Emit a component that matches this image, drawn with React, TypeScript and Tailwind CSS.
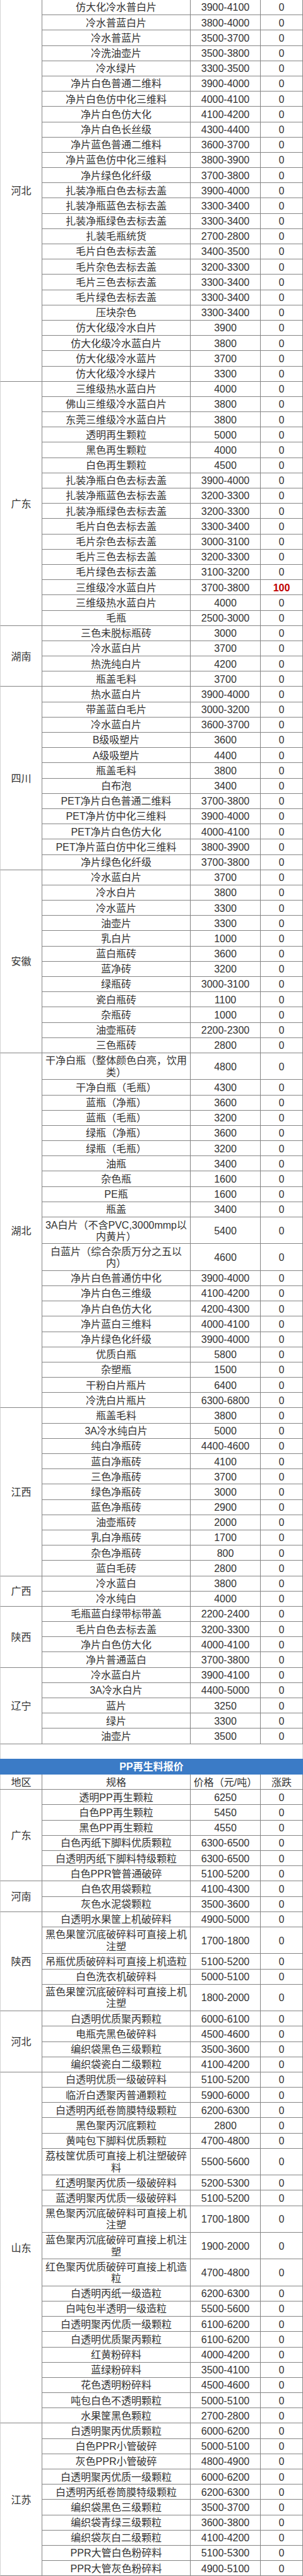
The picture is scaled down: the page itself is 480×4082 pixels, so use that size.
import React from 'react';

type Row = [string, string, string?];

interface Group {
  region: string;
  rows: Row[];
}

const petGroups: Group[] = [
  {
    region: '河北',
    rows: [
      ['仿大化冷水普白片', '3900-4100'],
      ['冷水普蓝白片', '3800-4000'],
      ['冷水普蓝片', '3500-3700'],
      ['冷洗油壶片', '3500-3800'],
      ['冷水绿片', '3300-3500'],
      ['净片白色普通二维料', '3900-4000'],
      ['净片白色仿中化三维料', '4000-4100'],
      ['净片白色仿大化', '4100-4200'],
      ['净片白色长丝级', '4300-4400'],
      ['净片蓝色普通二维料', '3600-3700'],
      ['净片蓝色仿中化三维料', '3800-3900'],
      ['净片绿色化纤级', '3700-3800'],
      ['扎装净瓶白色去标去盖', '3900-4000'],
      ['扎装净瓶蓝色去标去盖', '3300-3400'],
      ['扎装净瓶绿色去标去盖', '3300-3400'],
      ['扎装毛瓶统货', '2700-2800'],
      ['毛片白色去标去盖', '3400-3500'],
      ['毛片杂色去标去盖', '3200-3300'],
      ['毛片三色去标去盖', '3300-3400'],
      ['毛片绿色去标去盖', '3300-3400'],
      ['压块杂色', '3300-3400'],
      ['仿大化级冷水白片', '3900'],
      ['仿大化级冷水蓝白片', '3800'],
      ['仿大化级冷水蓝片', '3700'],
      ['仿大化级冷水绿片', '3300'],
    ],
  },
  {
    region: '广东',
    rows: [
      ['三维级热水蓝白片', '4000'],
      ['佛山三维级冷水蓝白片', '3800'],
      ['东莞三维级冷水蓝白片', '3800'],
      ['透明再生颗粒', '5000'],
      ['黑色再生颗粒', '4000'],
      ['白色再生颗粒', '4500'],
      ['扎装净瓶白色去标去盖', '3900-4000'],
      ['扎装净瓶蓝色去标去盖', '3200-3300'],
      ['扎装净瓶绿色去标去盖', '3200-3300'],
      ['毛片白色去标去盖', '3300-3400'],
      ['毛片杂色去标去盖', '3000-3100'],
      ['毛片三色去标去盖', '3200-3300'],
      ['毛片绿色去标去盖', '3100-3200'],
      ['三维级冷水蓝白片', '3700-3800', '100'],
      ['三维级热水蓝白片', '4000'],
      ['毛瓶', '2500-3000'],
    ],
  },
  {
    region: '湖南',
    rows: [
      ['三色未脱标瓶砖', '3000'],
      ['冷水蓝白片', '3700'],
      ['热洗纯白片', '4200'],
      ['瓶盖毛料', '3700'],
    ],
  },
  {
    region: '四川',
    rows: [
      ['热水蓝白片', '3900-4000'],
      ['带盖蓝白毛片', '3000-3200'],
      ['冷水蓝白片', '3600-3700'],
      ['B级吸塑片', '3600'],
      ['A级吸塑片', '4400'],
      ['瓶盖毛料', '3800'],
      ['白布泡', '3400'],
      ['PET净片白色普通二维料', '3700-3800'],
      ['PET净片仿中化三维料', '3900-4000'],
      ['PET净片白色仿大化', '4000-4100'],
      ['PET净片蓝白仿中化三维料', '3800-3900'],
      ['净片绿色化纤级', '3700-3800'],
    ],
  },
  {
    region: '安徽',
    rows: [
      ['冷水蓝白片', '3700'],
      ['冷水白片', '3800'],
      ['冷水蓝片', '3300'],
      ['油壶片', '3300'],
      ['乳白片', '1000'],
      ['蓝白瓶砖', '3600'],
      ['蓝净砖', '3200'],
      ['绿瓶砖', '3000-3100'],
      ['瓷白瓶砖', '1100'],
      ['杂瓶砖', '1000'],
      ['油壶瓶砖', '2200-2300'],
      ['三色瓶砖', '2800'],
    ],
  },
  {
    region: '湖北',
    rows: [
      ['干净白瓶（整体颜色白亮，饮用类）', '4800'],
      ['干净白瓶（毛瓶）', '4300'],
      ['蓝瓶（净瓶）', '3600'],
      ['蓝瓶（毛瓶）', '3200'],
      ['绿瓶（净瓶）', '3600'],
      ['绿瓶（毛瓶）', '3200'],
      ['油瓶', '3400'],
      ['杂色瓶', '1600'],
      ['PE瓶', '1600'],
      ['瓶盖', '3400'],
      ['3A白片（不含PVC,3000mmp以内黄片）', '5400'],
      ['白蓝片（综合杂质万分之五以内）', '4600'],
      ['净片白色普通仿中化', '3900-4000'],
      ['净片白色三维级', '4100-4200'],
      ['净片白色仿大化', '4200-4300'],
      ['净片蓝白三维料', '4000-4100'],
      ['净片绿色化纤级', '3900-4000'],
      ['优质白瓶', '5800'],
      ['杂塑瓶', '1500'],
      ['干粉白片瓶片', '6400'],
      ['冷洗白片瓶片', '6300-6800'],
    ],
  },
  {
    region: '江西',
    rows: [
      ['瓶盖毛料', '3800'],
      ['3A冷水纯白片', '5000'],
      ['纯白净瓶砖', '4400-4600'],
      ['蓝白净瓶砖', '4100'],
      ['三色净瓶砖', '3700'],
      ['绿色净瓶砖', '3000'],
      ['蓝色净瓶砖', '2900'],
      ['油壶瓶砖', '2000'],
      ['乳白净瓶砖', '1700'],
      ['杂色净瓶砖', '800'],
      ['蓝白毛砖', '2800'],
    ],
  },
  {
    region: '广西',
    rows: [
      ['冷水蓝白', '3800'],
      ['冷水纯白', '4000'],
    ],
  },
  {
    region: '陕西',
    rows: [
      ['毛瓶蓝白绿带标带盖', '2200-2400'],
      ['毛片白色去标去盖', '3200-3300'],
      ['净片白色仿大化', '4000-4100'],
      ['净片普通蓝白', '3700-3800'],
    ],
  },
  {
    region: '辽宁',
    rows: [
      ['冷水蓝白片', '3900-4100'],
      ['3A冷水白片', '4400-5000'],
      ['蓝片', '3250'],
      ['绿片', '3300'],
      ['油壶片', '3500'],
    ],
  },
];

const ppGroups: Group[] = [
  {
    region: '广东',
    rows: [
      ['透明PP再生颗粒', '6250'],
      ['白色PP再生颗粒', '5450'],
      ['黑色PP再生颗粒', '4550'],
      ['白色丙纸下脚料优质颗粒', '6300-6500'],
      ['白透明丙纸下脚料特级颗粒', '6300-6500'],
      ['白色PPR管普通破碎', '5100-5200'],
    ],
  },
  {
    region: '河南',
    rows: [
      ['白色农用袋颗粒', '4100-4300'],
      ['灰色水泥袋颗粒', '3500-3600'],
    ],
  },
  {
    region: '陕西',
    rows: [
      ['白透明水果筐上机破碎料', '4900-5000'],
      ['黑色果筐沉底破碎料可直接上机注塑', '1700-1800'],
      ['吊瓶优质破碎料可直接上机造粒', '5100-5200'],
      ['白色洗衣机破碎料', '5000-5100'],
      ['蓝色果筐沉底破碎料可直接上机注塑', '1800-2000'],
    ],
  },
  {
    region: '河北',
    rows: [
      ['白透明优质聚丙颗粒', '6000-6100'],
      ['电瓶壳黑色破碎料', '4500-4600'],
      ['编织袋黑色三级颗粒', '3500-3600'],
      ['编织袋瓷白二级颗粒', '4100-4200'],
    ],
  },
  {
    region: '山东',
    rows: [
      ['白透明优质一级破碎料', '5100-5200'],
      ['临沂白透聚丙普通颗粒', '5900-6000'],
      ['白透明丙纸卷筒膜特级颗粒', '6200-6300'],
      ['黑色聚丙沉底颗粒', '2800'],
      ['黄吨包下脚料优质颗粒', '4700-4800'],
      ['荔枝筐优质可直接上机注塑破碎料', '5500-5600'],
      ['红透明聚丙优质一级破碎料', '5200-5300'],
      ['蓝透明聚丙优质一级破碎料', '5100-5200'],
      ['黑色聚丙沉底破碎料可直接上机注塑', '1700-1800'],
      ['蓝色聚丙沉底破碎可直接上机注塑', '1900-2000'],
      ['红色聚丙优质破碎可直接上机造粒', '4700-4800'],
      ['白透明丙纸一级造粒', '6200-6300'],
      ['白吨包半透明一级造粒', '5500-5600'],
      ['白透明聚丙优质一级颗粒', '6100-6200'],
      ['白透明优质聚丙颗粒', '6100-6200'],
      ['红黄粉碎料', '4000-4200'],
      ['蓝绿粉碎料', '3500-4100'],
      ['花色透明粉碎料', '4500-4600'],
      ['吨包白色不透明颗粒', '5000-5100'],
      ['水果筐黑色颗粒', '2700-2800'],
    ],
  },
  {
    region: '江苏',
    rows: [
      ['白透明聚丙优质颗粒', '6000-6200'],
      ['白色PPR小管破碎', '5000-5100'],
      ['灰色PPR小管破碎', '4800-4900'],
      ['白透明聚丙优质一级颗粒', '6000-6200'],
      ['白透明丙纸卷筒膜特级颗粒', '6200-6300'],
      ['编织袋黑色三级颗粒', '3500-3700'],
      ['编织袋青绿三级颗粒', '3600-3800'],
      ['编织袋灰白二级颗粒', '4100-4200'],
      ['PPR大管白色粉碎料', '5100-5300'],
      ['PPR大管灰色粉碎料', '4900-5100'],
    ],
  },
];

const cell =
  'flex items-center justify-center text-center border-r border-[#858585] px-[4px] pt-[2px] leading-[18.2px]';

// long specs wrap onto two lines in the 235px column
const rowHeight = (spec: string) => (spec.length >= 15 ? 'h-[42.4px]' : 'h-[24.19px]');

const PriceGroup: React.FC<{ group: Group }> = ({ group }) => (
  <div className="flex">
    <div className="flex w-[67px] shrink-0 items-center justify-center border-r border-b border-l border-[#858585] border-l-[#d4d4d4] pt-[2px]">
      {group.region}
    </div>
    <div className="flex flex-1 flex-col">
      {group.rows.map(([spec, price, change = '0'], i) => (
        <div key={i} className={`flex border-b border-[#858585] ${rowHeight(spec)}`}>
          <div className={`${cell} w-[235px]`}>{spec}</div>
          <div className={`${cell} w-[111px]`}>{price}</div>
          <div className={`${cell} w-[67px]`}>
            {change === '0' ? change : <span className="font-bold text-[#c00000]">{change}</span>}
          </div>
        </div>
      ))}
    </div>
  </div>
);

export default function App() {
  return (
    <div className="w-[480px] bg-white text-[16px] text-[#333] font-['Liberation_Sans','Noto_Sans_CJK_SC',sans-serif]">
      {petGroups.map((g) => (
        <PriceGroup key={g.region} group={g} />
      ))}

      <div className="h-[23.4px] border-x border-[#d4d4d4]" />

      <div className="flex h-[25px] items-center justify-center bg-[#3b7bc6] font-bold text-white">
        PP再生料报价
      </div>

      <div className="flex h-[24.3px] border-b border-[#858585]">
        <div className={`${cell} w-[67px] border-l border-l-[#d4d4d4]`}>地区</div>
        <div className={`${cell} w-[235px]`}>规格</div>
        <div className={`${cell} w-[111px]`}>价格（元/吨）</div>
        <div className={`${cell} w-[67px]`}>涨跌</div>
      </div>

      {ppGroups.map((g, i) => (
        <PriceGroup key={g.region + i} group={g} />
      ))}
    </div>
  );
}
